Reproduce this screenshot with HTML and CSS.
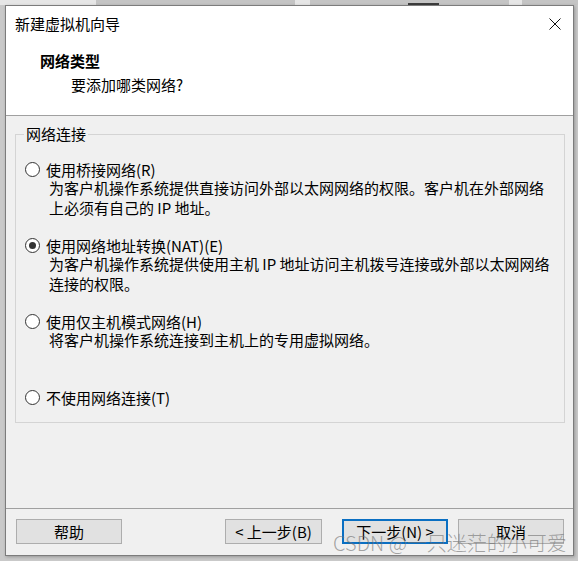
FILE: index.html
```html
<!DOCTYPE html>
<html lang="zh-CN">
<head>
<meta charset="utf-8">
<title>新建虚拟机向导</title>
<link rel="stylesheet" href="styles.css">
</head>
<body>
<div class="backdrop">
  <div class="strip">
    <div class="patch light" style="width:96px"></div>
    <div class="patch grey" style="width:199px"></div>
    <div class="patch light" style="width:15px"></div>
    <div class="patch grey bar-host" style="width:199px"><span class="darkbar"></span></div>
    <div class="patch light" style="width:13px"></div>
    <div class="patch grey" style="width:56px"></div>
  </div>
  <div class="row">
    <div class="dialog">
      <div class="header">
        <div class="titlebar">
          <span class="title">新建虚拟机向导</span>
          <svg class="close" width="12" height="12" viewBox="0 0 12 12"><path d="M0.5 0.5 L11.5 11.5 M11.5 0.5 L0.5 11.5" stroke="#111" stroke-width="1" fill="none"/></svg>
        </div>
        <div class="heading">网络类型</div>
        <div class="subheading">要添加哪类网络?</div>
      </div>
      <div class="body">
        <fieldset class="group">
          <legend>网络连接</legend>
          <div class="option">
            <div class="opt-label"><span class="radio"></span><span>使用桥接网络(R)</span></div>
            <div class="desc">为客户机操作系统提供直接访问外部以太网网络的权限。客户机在外部网络<br>上必须有自己的 IP 地址。</div>
          </div>
          <div class="option">
            <div class="opt-label"><span class="radio checked"></span><span>使用网络地址转换(NAT)(E)</span></div>
            <div class="desc">为客户机操作系统提供使用主机 IP 地址访问主机拨号连接或外部以太网网络<br>连接的权限。</div>
          </div>
          <div class="option">
            <div class="opt-label"><span class="radio"></span><span>使用仅主机模式网络(H)</span></div>
            <div class="desc">将客户机操作系统连接到主机上的专用虚拟网络。</div>
          </div>
          <div class="option last">
            <div class="opt-label"><span class="radio"></span><span>不使用网络连接(T)</span></div>
          </div>
        </fieldset>
      </div>
      <div class="footer">
        <button class="btn">帮助</button>
        <span class="spacer"></span>
        <button class="btn back">&lt; 上一步(B)</button>
        <button class="btn next">下一步(N) &gt;</button>
        <button class="btn cancel">取消</button>
      </div>
    </div>
  </div>
  <div class="watermark">CSDN @一只迷茫的小可爱</div>
</div>
</body>
</html>
```
FILE: styles.css
```css
* { box-sizing: border-box; }
html, body { margin: 0; padding: 0; }
body {
  width: 578px;
  height: 561px;
  overflow: hidden;
  background: #c9c9c9;
  font-family: "Noto Sans CJK SC", "Noto Sans", sans-serif;
  font-size: 15px;
  color: #000;
}
.backdrop {
  position: relative;
  width: 578px;
  height: 561px;
}
.strip {
  display: flex;
  height: 5px;
}
.patch { height: 5px; }
.patch.light { background: #e6e6e6; }
.patch.grey { background: #c4c4c4; }
.bar-host {
  display: flex;
  align-items: flex-end;
  padding-left: 98px;
}
.darkbar {
  display: block;
  width: 31px;
  height: 2px;
  background: #3d3d3d;
}
.row {
  display: flex;
  padding-left: 5px;
}
.dialog {
  width: 569px;
  height: 551px;
  border: 1px solid #7c7c7c;
  background: #f0f0f0;
  display: flex;
  flex-direction: column;
  box-shadow: 1px 1px 3px rgba(0,0,0,0.25);
}
.header {
  height: 110px;
  background: #fff;
  border-bottom: 1px solid #a0a0a0;
  padding: 8px 12px 0 9px;
  flex: none;
}
.titlebar {
  display: flex;
  align-items: center;
  justify-content: space-between;
  height: 20px;
  line-height: 20px;
}
.title { font-size: 15px; }
.close { display: block; }
.heading {
  margin: 17px 0 0 25px;
  font-weight: 700;
  line-height: 20px;
}
.subheading {
  margin: 4px 0 0 56px;
  line-height: 20px;
}
.body {
  flex: 1;
  padding: 8px 8px 0 9px;
}
.group {
  margin: 0;
  border: 1px solid #d4d4d4;
  padding: 17px 9px 16px 9px;
  display: flex;
  flex-direction: column;
  gap: 19px;
}
.group legend {
  padding: 0 2px;
  margin-left: -1px;
  line-height: 20px;
}
.option { display: flex; flex-direction: column; }
.option.last { margin-top: 20px; }
.opt-label {
  display: flex;
  align-items: center;
  height: 17px;
  line-height: 17px;
}
.radio {
  width: 15px;
  height: 15px;
  border: 1px solid #333;
  border-radius: 50%;
  background: #fff;
  margin-right: 6px;
  flex: none;
  display: flex;
  align-items: center;
  justify-content: center;
}
.radio.checked::after {
  content: "";
  width: 7px;
  height: 7px;
  border-radius: 50%;
  background: #333;
}
.desc {
  padding-left: 24px;
  line-height: 20px;
}
.footer {
  flex: none;
  height: 47px;
  border-top: 1px solid #a0a0a0;
  padding: 10px 9px 0 10px;
  display: flex;
  align-items: flex-start;
}
.spacer { flex: 1; }
.btn {
  height: 25px;
  width: 106px;
  background: #e1e1e1;
  border: 1px solid #adadad;
  font-family: "Noto Sans CJK SC", "Noto Sans", sans-serif;
  font-size: 15px;
  line-height: 21px;
  padding: 0;
  color: #000;
}
.btn.back { width: 97px; margin-right: 20px; }
.btn.next { border: 2px solid #0a6fc2; margin-right: 10px; }
.watermark {
  position: absolute;
  left: 333px;
  top: 530px;
  font-size: 20px;
  line-height: 26px;
  font-weight: 300;
  color: rgba(110, 110, 110, 0.6);
  white-space: nowrap;
}
```
